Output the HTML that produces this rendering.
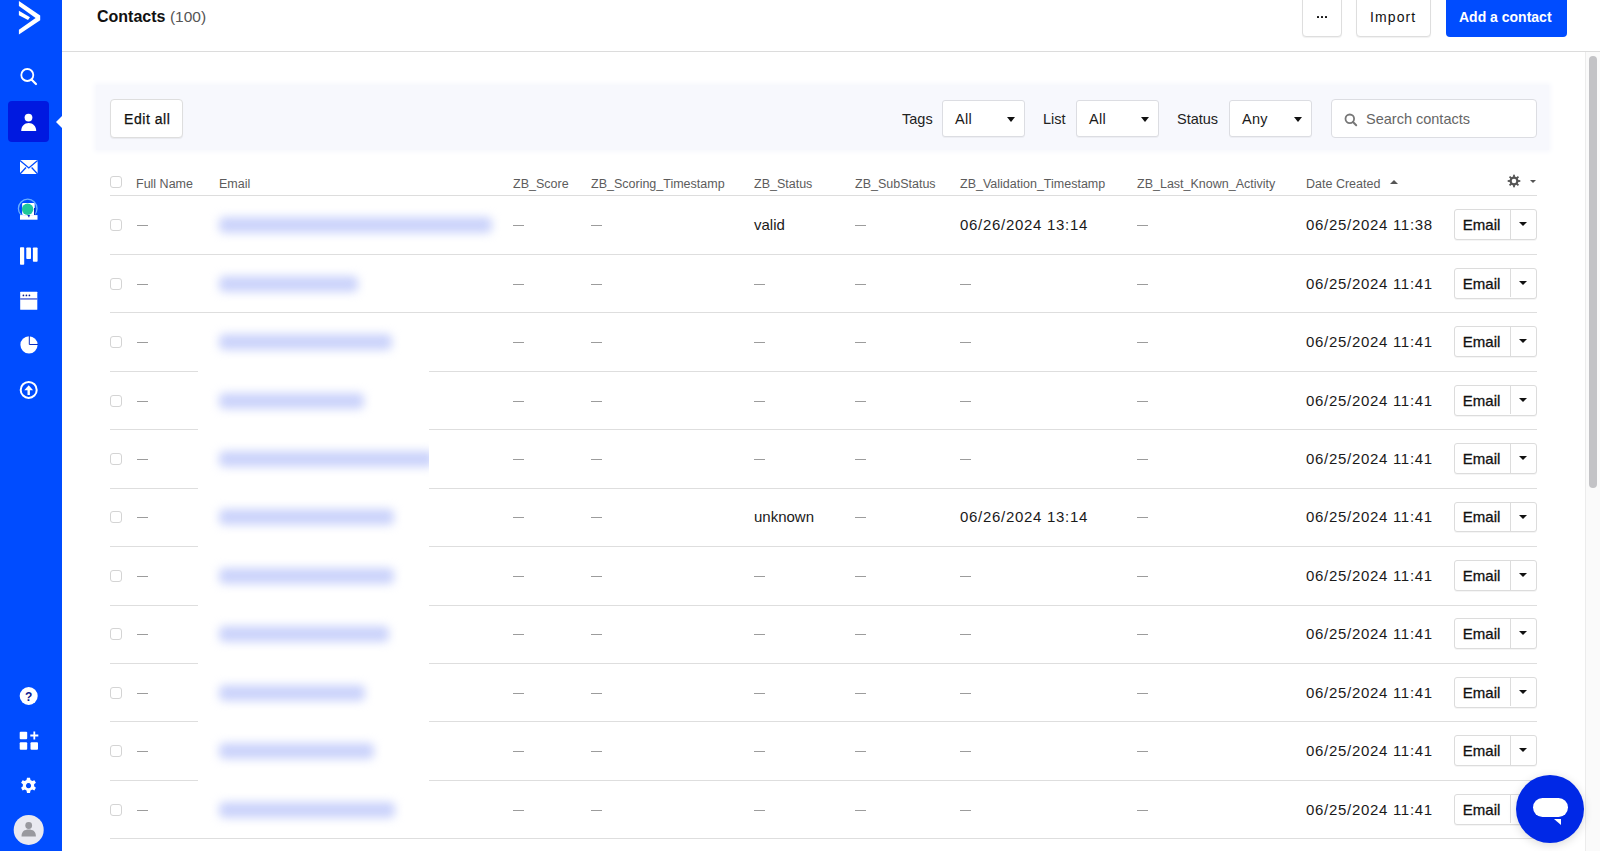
<!DOCTYPE html>
<html><head><meta charset="utf-8">
<style>
*{box-sizing:border-box;margin:0;padding:0}
html,body{width:1600px;height:851px;overflow:hidden;background:#fff;font-family:"Liberation Sans",sans-serif;color:#1f1f1f;position:relative}
.abs{position:absolute}
#side{position:absolute;left:0;top:0;width:62px;height:851px;background:#004cff}
#header{position:absolute;left:62px;top:0;width:1538px;height:52px;border-bottom:1px solid #dcdcdc;background:#fff}
.title{position:absolute;left:97px;top:7px;font-size:16px;font-weight:700;color:#111;line-height:20px;white-space:nowrap}
.title span{font-weight:400;color:#555;font-size:15.5px}
.btn{position:absolute;background:#fff;border:1px solid #dedede;border-radius:4px;box-shadow:0 1px 1px rgba(0,0,0,.06);color:#111;font-size:14px}
.bbtn{position:absolute;background:#004cff;border-radius:4px;font-size:14px}
.bt{position:absolute;top:14px;line-height:17px;white-space:nowrap}
.dots{position:absolute;left:12px;top:15px;font-weight:700;font-size:14px;line-height:14px}
#filter{position:absolute;left:96px;top:85px;width:1453px;height:65px;background:#f7f8fd;box-shadow:0 0 5px 2px #f7f8fd}
.lbl{position:absolute;font-size:14.5px;color:#222;line-height:20px}
.sel{position:absolute;background:#fff;border:1px solid #dcdde2;border-radius:3px;box-shadow:0 1px 0 rgba(0,0,0,.04);height:37.3px;top:100.2px;width:83px;font-size:14.5px;color:#1a1a1a}
.sel .v{position:absolute;left:12px;top:7.7px;line-height:20px;letter-spacing:0.3px}
.caret{position:absolute;width:0;height:0;border-left:4.5px solid transparent;border-right:4.5px solid transparent;border-top:5px solid #111}
.caretup{position:absolute;width:0;height:0;border-left:4px solid transparent;border-right:4px solid transparent;border-bottom:4px solid #555}
.search{position:absolute;left:1331px;top:99px;width:206px;height:39px;background:#fff;border:1px solid #dcdde2;border-radius:4px}
.search .ph{position:absolute;left:34px;top:9px;font-size:14.5px;line-height:20px;color:#666;white-space:nowrap}
.th{position:absolute;top:175.5px;font-size:12.5px;color:#5c5c5c;line-height:16px;white-space:nowrap}
.hline{position:absolute;height:1px;background:#dedede}
.cb{position:absolute;left:110px;width:12px;height:12px;border:1px solid #d4d4d4;border-radius:3px;background:#fff}
.td{position:absolute;font-size:15px;color:#1a1a1a;line-height:18px;white-space:nowrap}
.dt{letter-spacing:0.7px}
.dash{position:absolute;width:10.5px;height:1px;background:#9c9c9c}
.ebtn{position:absolute;left:1454px;width:83px;height:30.8px;border:1px solid #dcdcdc;border-radius:3px;background:#fff;box-shadow:0 1px 0 rgba(0,0,0,.04)}
.ebtn .t{position:absolute;left:7.8px;top:5.8px;font-size:15px;line-height:18px;color:#111;-webkit-text-stroke:0.3px #111}
.ebtn .d{position:absolute;left:55px;top:0;width:1px;height:28.5px;background:#dcdcdc}
.blur{position:absolute;height:16px;background:#cbd3fb;border-radius:5px;filter:blur(5px)}
.chat{position:absolute;left:1516px;top:775px;width:68px;height:68px;border-radius:50%;background:#0028e6;box-shadow:0 2px 10px rgba(0,0,0,.15)}
.chat .pill{position:absolute;left:17px;top:23px;width:35px;height:19px;border-radius:10px;background:#fff}
.chat .tail{position:absolute;left:38px;top:44px;width:0;height:0;border-left:7px solid transparent;border-top:6px solid #fff}

</style></head><body>
<div id="header"></div>
<div class="title">Contacts <span>(100)</span></div>
<div class="btn" style="left:1302px;top:-6px;width:40px;height:43px"><span class="abs" style="left:13.5px;top:20.5px;width:2.6px;height:2.6px;background:#111;border-radius:0.5px"></span><span class="abs" style="left:17.7px;top:20.5px;width:2.6px;height:2.6px;background:#111;border-radius:0.5px"></span><span class="abs" style="left:21.9px;top:20.5px;width:2.6px;height:2.6px;background:#111;border-radius:0.5px"></span></div>
<div class="btn" style="left:1356px;top:-6px;width:75px;height:43px"><span class="bt" style="left:13px;letter-spacing:1.1px">Import</span></div>
<div class="bbtn" style="left:1446px;top:-6px;width:121px;height:43px"><span class="bt" style="left:13px;top:15px;color:#fff;font-weight:700">Add a contact</span></div>
<div id="filter"></div>
<div class="btn" style="left:110px;top:99px;width:73px;height:39px"><span class="bt" style="left:13px;top:11px;letter-spacing:0.55px;-webkit-text-stroke:0.25px #111">Edit all</span></div>
<div class="lbl" style="left:902px;top:108.5px">Tags</div>
<div class="sel" style="left:942px"><span class="v">All</span><span class="caret" style="left:64px;top:16px;border-left-width:4.9px;border-right-width:4.9px;border-top-width:5.2px"></span></div>
<div class="lbl" style="left:1043px;top:108.5px">List</div>
<div class="sel" style="left:1076px"><span class="v">All</span><span class="caret" style="left:64px;top:16px;border-left-width:4.9px;border-right-width:4.9px;border-top-width:5.2px"></span></div>
<div class="lbl" style="left:1177px;top:108.5px">Status</div>
<div class="sel" style="left:1229px"><span class="v">Any</span><span class="caret" style="left:64px;top:16px;border-left-width:4.9px;border-right-width:4.9px;border-top-width:5.2px"></span></div>
<div class="search"><svg class="abs" style="left:12px;top:13px" width="14" height="14" viewBox="0 0 14 14"><circle cx="5.8" cy="5.8" r="4.3" fill="none" stroke="#777" stroke-width="1.8"/><path d="M9 9l3.2 3.2" stroke="#777" stroke-width="2" stroke-linecap="round"/></svg><span class="ph">Search contacts</span></div>
<div class="cb" style="top:176px"></div>
<div class="th" style="left:136px">Full Name</div>
<div class="th" style="left:219px">Email</div>
<div class="th" style="left:513px">ZB_Score</div>
<div class="th" style="left:591px">ZB_Scoring_Timestamp</div>
<div class="th" style="left:754px">ZB_Status</div>
<div class="th" style="left:855px">ZB_SubStatus</div>
<div class="th" style="left:960px">ZB_Validation_Timestamp</div>
<div class="th" style="left:1137px">ZB_Last_Known_Activity</div>
<div class="th" style="left:1306px">Date Created</div>
<span class="caretup" style="left:1390px;top:180px"></span>
<svg class="abs" style="left:1506px;top:173px" width="16" height="16" viewBox="-8 -8 16 16"><g fill="#555"><rect x="-0.9" y="-6.3" width="1.8" height="3" transform="rotate(0)"/><rect x="-0.9" y="-6.3" width="1.8" height="3" transform="rotate(45)"/><rect x="-0.9" y="-6.3" width="1.8" height="3" transform="rotate(90)"/><rect x="-0.9" y="-6.3" width="1.8" height="3" transform="rotate(135)"/><rect x="-0.9" y="-6.3" width="1.8" height="3" transform="rotate(180)"/><rect x="-0.9" y="-6.3" width="1.8" height="3" transform="rotate(225)"/><rect x="-0.9" y="-6.3" width="1.8" height="3" transform="rotate(270)"/><rect x="-0.9" y="-6.3" width="1.8" height="3" transform="rotate(315)"/></g><circle r="3.4" fill="none" stroke="#555" stroke-width="2.2"/></svg>
<span class="caret" style="left:1529.5px;top:180px;border-top-color:#555;border-left-width:3.3px;border-right-width:3.3px;border-top-width:3.7px"></span>
<div class="hline" style="left:110px;top:195px;width:1427px;height:1.3px;background:#dddddd"></div>
<div class="hline" style="left:110px;top:253.93px;width:1427px"></div>
<div class="cb" style="top:219.25px"></div>
<div class="dash" style="left:137px;top:225px"></div>
<div class="dash" style="left:513px;top:225px"></div>
<div class="dash" style="left:591px;top:225px"></div>
<div class="dash" style="left:855px;top:225px"></div>
<div class="dash" style="left:1137px;top:225px"></div>
<div class="td" style="left:754px;top:216.25px">valid</div>
<div class="td dt" style="left:960px;top:216.25px">06/26/2024 13:14</div>
<div class="td dt" style="left:1306px;top:216.25px">06/25/2024 11:38</div>
<div class="ebtn" style="top:209.45px"><span class="t">Email</span><span class="d"></span><span class="caret" style="left:64.3px;top:12px;border-left-width:4.2px;border-right-width:4.2px;border-top-width:4.8px"></span></div>
<div class="hline" style="left:110px;top:312.36px;width:1427px"></div>
<div class="cb" style="top:277.68px"></div>
<div class="dash" style="left:137px;top:284px"></div>
<div class="dash" style="left:513px;top:284px"></div>
<div class="dash" style="left:591px;top:284px"></div>
<div class="dash" style="left:855px;top:284px"></div>
<div class="dash" style="left:1137px;top:284px"></div>
<div class="dash" style="left:754px;top:284px"></div>
<div class="dash" style="left:960px;top:284px"></div>
<div class="td dt" style="left:1306px;top:274.68px">06/25/2024 11:41</div>
<div class="ebtn" style="top:267.88px"><span class="t">Email</span><span class="d"></span><span class="caret" style="left:64.3px;top:12px;border-left-width:4.2px;border-right-width:4.2px;border-top-width:4.8px"></span></div>
<div class="hline" style="left:110px;top:370.79px;width:1427px"></div>
<div class="cb" style="top:336.11px"></div>
<div class="dash" style="left:137px;top:342px"></div>
<div class="dash" style="left:513px;top:342px"></div>
<div class="dash" style="left:591px;top:342px"></div>
<div class="dash" style="left:855px;top:342px"></div>
<div class="dash" style="left:1137px;top:342px"></div>
<div class="dash" style="left:754px;top:342px"></div>
<div class="dash" style="left:960px;top:342px"></div>
<div class="td dt" style="left:1306px;top:333.11px">06/25/2024 11:41</div>
<div class="ebtn" style="top:326.31px"><span class="t">Email</span><span class="d"></span><span class="caret" style="left:64.3px;top:12px;border-left-width:4.2px;border-right-width:4.2px;border-top-width:4.8px"></span></div>
<div class="hline" style="left:110px;top:429.22px;width:1427px"></div>
<div class="cb" style="top:394.54px"></div>
<div class="dash" style="left:137px;top:401px"></div>
<div class="dash" style="left:513px;top:401px"></div>
<div class="dash" style="left:591px;top:401px"></div>
<div class="dash" style="left:855px;top:401px"></div>
<div class="dash" style="left:1137px;top:401px"></div>
<div class="dash" style="left:754px;top:401px"></div>
<div class="dash" style="left:960px;top:401px"></div>
<div class="td dt" style="left:1306px;top:391.54px">06/25/2024 11:41</div>
<div class="ebtn" style="top:384.74px"><span class="t">Email</span><span class="d"></span><span class="caret" style="left:64.3px;top:12px;border-left-width:4.2px;border-right-width:4.2px;border-top-width:4.8px"></span></div>
<div class="hline" style="left:110px;top:487.65px;width:1427px"></div>
<div class="cb" style="top:452.97px"></div>
<div class="dash" style="left:137px;top:459px"></div>
<div class="dash" style="left:513px;top:459px"></div>
<div class="dash" style="left:591px;top:459px"></div>
<div class="dash" style="left:855px;top:459px"></div>
<div class="dash" style="left:1137px;top:459px"></div>
<div class="dash" style="left:754px;top:459px"></div>
<div class="dash" style="left:960px;top:459px"></div>
<div class="td dt" style="left:1306px;top:449.97px">06/25/2024 11:41</div>
<div class="ebtn" style="top:443.17px"><span class="t">Email</span><span class="d"></span><span class="caret" style="left:64.3px;top:12px;border-left-width:4.2px;border-right-width:4.2px;border-top-width:4.8px"></span></div>
<div class="hline" style="left:110px;top:546.08px;width:1427px"></div>
<div class="cb" style="top:511.40px"></div>
<div class="dash" style="left:137px;top:517px"></div>
<div class="dash" style="left:513px;top:517px"></div>
<div class="dash" style="left:591px;top:517px"></div>
<div class="dash" style="left:855px;top:517px"></div>
<div class="dash" style="left:1137px;top:517px"></div>
<div class="td" style="left:754px;top:508.40px">unknown</div>
<div class="td dt" style="left:960px;top:508.40px">06/26/2024 13:14</div>
<div class="td dt" style="left:1306px;top:508.40px">06/25/2024 11:41</div>
<div class="ebtn" style="top:501.60px"><span class="t">Email</span><span class="d"></span><span class="caret" style="left:64.3px;top:12px;border-left-width:4.2px;border-right-width:4.2px;border-top-width:4.8px"></span></div>
<div class="hline" style="left:110px;top:604.51px;width:1427px"></div>
<div class="cb" style="top:569.83px"></div>
<div class="dash" style="left:137px;top:576px"></div>
<div class="dash" style="left:513px;top:576px"></div>
<div class="dash" style="left:591px;top:576px"></div>
<div class="dash" style="left:855px;top:576px"></div>
<div class="dash" style="left:1137px;top:576px"></div>
<div class="dash" style="left:754px;top:576px"></div>
<div class="dash" style="left:960px;top:576px"></div>
<div class="td dt" style="left:1306px;top:566.83px">06/25/2024 11:41</div>
<div class="ebtn" style="top:560.03px"><span class="t">Email</span><span class="d"></span><span class="caret" style="left:64.3px;top:12px;border-left-width:4.2px;border-right-width:4.2px;border-top-width:4.8px"></span></div>
<div class="hline" style="left:110px;top:662.94px;width:1427px"></div>
<div class="cb" style="top:628.26px"></div>
<div class="dash" style="left:137px;top:634px"></div>
<div class="dash" style="left:513px;top:634px"></div>
<div class="dash" style="left:591px;top:634px"></div>
<div class="dash" style="left:855px;top:634px"></div>
<div class="dash" style="left:1137px;top:634px"></div>
<div class="dash" style="left:754px;top:634px"></div>
<div class="dash" style="left:960px;top:634px"></div>
<div class="td dt" style="left:1306px;top:625.26px">06/25/2024 11:41</div>
<div class="ebtn" style="top:618.46px"><span class="t">Email</span><span class="d"></span><span class="caret" style="left:64.3px;top:12px;border-left-width:4.2px;border-right-width:4.2px;border-top-width:4.8px"></span></div>
<div class="hline" style="left:110px;top:721.37px;width:1427px"></div>
<div class="cb" style="top:686.69px"></div>
<div class="dash" style="left:137px;top:693px"></div>
<div class="dash" style="left:513px;top:693px"></div>
<div class="dash" style="left:591px;top:693px"></div>
<div class="dash" style="left:855px;top:693px"></div>
<div class="dash" style="left:1137px;top:693px"></div>
<div class="dash" style="left:754px;top:693px"></div>
<div class="dash" style="left:960px;top:693px"></div>
<div class="td dt" style="left:1306px;top:683.69px">06/25/2024 11:41</div>
<div class="ebtn" style="top:676.89px"><span class="t">Email</span><span class="d"></span><span class="caret" style="left:64.3px;top:12px;border-left-width:4.2px;border-right-width:4.2px;border-top-width:4.8px"></span></div>
<div class="hline" style="left:110px;top:779.80px;width:1427px"></div>
<div class="cb" style="top:745.12px"></div>
<div class="dash" style="left:137px;top:751px"></div>
<div class="dash" style="left:513px;top:751px"></div>
<div class="dash" style="left:591px;top:751px"></div>
<div class="dash" style="left:855px;top:751px"></div>
<div class="dash" style="left:1137px;top:751px"></div>
<div class="dash" style="left:754px;top:751px"></div>
<div class="dash" style="left:960px;top:751px"></div>
<div class="td dt" style="left:1306px;top:742.12px">06/25/2024 11:41</div>
<div class="ebtn" style="top:735.32px"><span class="t">Email</span><span class="d"></span><span class="caret" style="left:64.3px;top:12px;border-left-width:4.2px;border-right-width:4.2px;border-top-width:4.8px"></span></div>
<div class="hline" style="left:110px;top:838.23px;width:1427px"></div>
<div class="cb" style="top:803.55px"></div>
<div class="dash" style="left:137px;top:810px"></div>
<div class="dash" style="left:513px;top:810px"></div>
<div class="dash" style="left:591px;top:810px"></div>
<div class="dash" style="left:855px;top:810px"></div>
<div class="dash" style="left:1137px;top:810px"></div>
<div class="dash" style="left:754px;top:810px"></div>
<div class="dash" style="left:960px;top:810px"></div>
<div class="td dt" style="left:1306px;top:800.55px">06/25/2024 11:41</div>
<div class="ebtn" style="top:793.75px"><span class="t">Email</span><span class="d"></span><span class="caret" style="left:64.3px;top:12px;border-left-width:4.2px;border-right-width:4.2px;border-top-width:4.8px"></span></div>
<div class="abs" style="left:198px;top:322px;width:231px;height:513px;background:#fff;overflow:hidden">
<div class="blur" style="left:21px;top:12.11px;width:173px"></div>
<div class="blur" style="left:21px;top:70.54px;width:145px"></div>
<div class="blur" style="left:21px;top:128.97px;width:215px"></div>
<div class="blur" style="left:21px;top:187.40px;width:175px"></div>
<div class="blur" style="left:21px;top:245.83px;width:175px"></div>
<div class="blur" style="left:21px;top:304.26px;width:170px"></div>
<div class="blur" style="left:21px;top:362.69px;width:146px"></div>
<div class="blur" style="left:21px;top:421.12px;width:155px"></div>
<div class="blur" style="left:21px;top:479.55px;width:176px"></div>
</div>
<div class="blur" style="left:219px;top:217.25px;width:273px"></div>
<div class="blur" style="left:219px;top:275.68px;width:139px"></div>
<div class="abs" style="left:1585px;top:52px;width:15px;height:799px;background:#fafafa;border-left:1px solid #ececec"></div>
<div class="abs" style="left:1589px;top:56px;width:8px;height:432px;background:#c3c3c6;border-radius:4px"></div>
<div class="chat"><div class="pill"></div><div class="tail"></div></div>
<div id="side">
<svg class="abs" style="left:0;top:0" width="62" height="420" viewBox="0 0 62 420">
 <path d="M18.9 1.1 L40.2 15.6 L40.2 20.2 L18.9 34.6 L18.9 29.7 L35.6 17.9 L18.9 5.9 Z" fill="#fff"/>
 <path d="M18.9 10.7 L30 17.2 L28 20 L18.9 15.2 Z" fill="#fff"/>
 <circle cx="27.3" cy="75" r="6" fill="none" stroke="#fff" stroke-width="1.8"/>
 <path d="M31.5 79.5 L36 84" stroke="#fff" stroke-width="2.2" stroke-linecap="round"/>
 <rect x="8" y="101" width="41" height="41" rx="4" fill="#0019e0"/>
 <circle cx="28.5" cy="117.6" r="3.9" fill="#fff"/>
 <path d="M21.2 131 C21.2 126 24.5 123 28.7 123 C32.9 123 36.2 126 36.2 131 Z" fill="#fff"/>
 <path d="M56 122 L62 116 L62 128 Z" fill="#fff"/>
 <rect x="20" y="160" width="17.6" height="14" fill="#fff"/>
 <path d="M20 160.5 L28.8 168 L37.6 160.5 M20 174 L26 167.5 M37.6 174 L31.6 167.5" fill="none" stroke="#004cff" stroke-width="1.3"/>
 <circle cx="27.7" cy="208.5" r="9.3" fill="none" stroke="#6ab0ff" stroke-width="1.3"/>
 <rect x="22.1" y="203.1" width="12.6" height="12" rx="1" fill="#fff"/>
 <rect x="34" y="208" width="1.2" height="7" fill="#0a2fc0"/>
 <circle cx="27.6" cy="209.2" r="5.7" fill="#1fc79a"/>
 <rect x="20" y="215.1" width="17.5" height="4.6" fill="#fff"/>
 <path d="M27.3 215.1 L30 215.1 L29 217.8 Z" fill="#0a2fc0"/>
 <rect x="20" y="247.2" width="4.2" height="17.6" rx="0.8" fill="#fff"/>
 <rect x="26.3" y="247.5" width="4.7" height="11.5" rx="0.8" fill="#fff"/>
 <rect x="32.9" y="247.5" width="4.7" height="14.3" rx="0.8" fill="#fff"/>
 <rect x="20.2" y="291.8" width="17.1" height="17.9" rx="0.5" fill="#fff"/>
 <rect x="20.2" y="298.4" width="17.1" height="1.1" fill="#1a35c8"/>
 <circle cx="23.4" cy="295.4" r="0.85" fill="#0a1f90"/><circle cx="26.4" cy="295.4" r="0.85" fill="#0a1f90"/><circle cx="29.4" cy="295.4" r="0.85" fill="#0a1f90"/>
 <circle cx="29" cy="344.8" r="8.6" fill="#fff"/>
 <path d="M29.3 335.8 V344.5 H38" fill="none" stroke="#0a2fc0" stroke-width="1"/>
 <circle cx="28.7" cy="389.9" r="8" fill="none" stroke="#fff" stroke-width="2"/>
 <path d="M24.3 390.3 L28.7 385.2 L33.1 390.3 Z" fill="#fff"/><rect x="27.5" y="389" width="2.4" height="6" fill="#fff"/>
</svg>
<svg class="abs" style="left:0;top:670px" width="62" height="181" viewBox="0 670 62 181">
 <circle cx="28.7" cy="696" r="9" fill="#fff"/>
 <text x="28.7" y="700.5" text-anchor="middle" font-family="Liberation Sans" font-weight="700" font-size="12" fill="#0a1a90">?</text>
 <rect x="19.7" y="731.8" width="7.5" height="7.5" rx="1" fill="#fff"/>
 <rect x="19.7" y="742.3" width="7.5" height="7.5" rx="1" fill="#fff"/>
 <rect x="30.5" y="742.3" width="7.5" height="7.5" rx="1" fill="#fff"/>
 <path d="M34.3 731.5 V739.5 M30.3 735.5 H38.3" stroke="#fff" stroke-width="1.8"/>
 <g transform="translate(28.5 785.7)"><path fill="#fff" d="M-1.5 -8 h3 l.5 2.3 a6 6 0 0 1 1.7 1 l2.2 -.8 1.5 2.6 -1.8 1.5 a6 6 0 0 1 0 2 l1.8 1.5 -1.5 2.6 -2.2 -.8 a6 6 0 0 1 -1.7 1 l-.5 2.3 h-3 l-.5 -2.3 a6 6 0 0 1 -1.7 -1 l-2.2 .8 -1.5 -2.6 1.8 -1.5 a6 6 0 0 1 0 -2 l-1.8 -1.5 1.5 -2.6 2.2 .8 a6 6 0 0 1 1.7 -1 z M0 -2.6 a2.6 2.6 0 1 0 .01 0z"/></g>
 <circle cx="28.7" cy="829.9" r="15" fill="#e9e9f0"/>
 <circle cx="28.7" cy="825.5" r="3.4" fill="#98989e"/>
 <path d="M21.5 836.5 C21.5 831.5 24.5 829.6 28.7 829.6 C32.9 829.6 35.9 831.5 35.9 836.5 Z" fill="#98989e"/>
</svg>
</div>
</body></html>
